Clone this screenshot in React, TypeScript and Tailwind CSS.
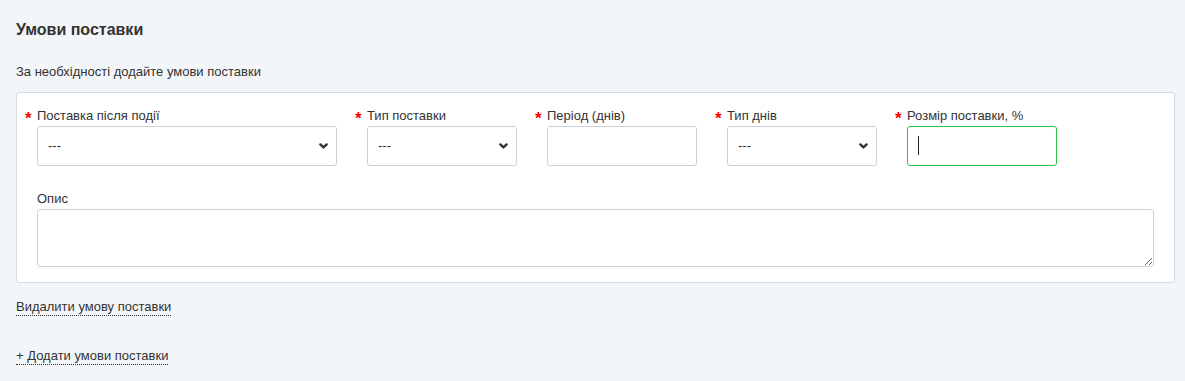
import { ReactNode } from "react";

function Chevron() {
  return (
    <svg
      className="pointer-events-none absolute right-[9px] top-1/2 -translate-y-1/2"
      width="9"
      height="6"
      viewBox="0 0 9 6"
      fill="none"
      stroke="#333"
      strokeWidth="2.4"
      strokeLinecap="round"
      strokeLinejoin="round"
    >
      <path d="M1.4 1.4 4.5 4.4l3.1-3" />
    </svg>
  );
}

function Field({ label, width, children }: { label: string; width: string; children: ReactNode }) {
  return (
    <div className={`flex flex-col ${width}`}>
      <label className="relative mb-[2px] h-4 leading-4 text-[13px] text-[#333]">
        <span className="absolute -left-[12px] top-[3px] text-[17px] font-bold text-[#f00]">*</span>
        {label}
      </label>
      {children}
    </div>
  );
}

function Select({ w }: { w: string }) {
  return (
    <div className={`relative ${w}`}>
      <select className="h-10 w-full appearance-none rounded-[3px] border border-[#cfd1dc] bg-white pl-[10px] text-[13px] text-[#333] outline-none">
        <option>---</option>
      </select>
      <Chevron />
    </div>
  );
}

export default function App() {
  return (
    <div
      className="min-h-[381px] bg-[#f3f6f9] pl-4 pr-[10px] pt-[20px] text-[#333]"
      style={{ fontFamily: '"Liberation Sans", Arial, sans-serif' }}
    >
      <h2 className="h-5 text-[16px] font-bold leading-5 text-[#333]">Умови поставки</h2>
      <p className="mt-[24px] h-4 text-[13px] leading-4">За необхідності додайте умови поставки</p>

      <div className="mt-[12px] rounded-[3px] border border-[#d6d9e0] bg-white pb-[15px] pl-5 pr-5 pt-[15px]">
        <div className="flex gap-[30px]">
          <Field label="Поставка після події" width="w-[300px]">
            <Select w="w-[300px]" />
          </Field>
          <Field label="Тип поставки" width="w-[150px]">
            <Select w="w-[150px]" />
          </Field>
          <Field label="Період (днів)" width="w-[150px]">
            <input className="h-10 w-[150px] rounded-[3px] border border-[#cfd1dc] bg-white px-[10px] text-[13px] outline-none" />
          </Field>
          <Field label="Тип днів" width="w-[150px]">
            <Select w="w-[150px]" />
          </Field>
          <Field label="Розмір поставки, %" width="w-[150px]">
            <div className="relative">
              <input className="h-10 w-[150px] rounded-[3px] border border-[#2bc24a] bg-white px-[10px] text-[13px] outline-none" />
              <span className="absolute left-[11px] top-[10px] h-[19px] w-px bg-[#222]" />
            </div>
          </Field>
        </div>

        <div className="mt-[25px] flex flex-col">
          <label className="mb-[2px] h-4 text-[13px] leading-4">Опис</label>
          <textarea className="block h-[58px] w-full rounded-[3px] border border-[#cfd1dc] bg-white px-[10px] text-[13px] outline-none" />
        </div>
      </div>

      <div className="mt-[16px] flex flex-col items-start gap-[32px] text-[13px] leading-4">
        <button className="border-b border-dotted border-[#333] leading-[16px] text-[#333]">
          Видалити умову поставки
        </button>
        <button className="border-b border-dotted border-[#333] leading-[16px] text-[#333]">
          + Додати умови поставки
        </button>
      </div>
    </div>
  );
}
